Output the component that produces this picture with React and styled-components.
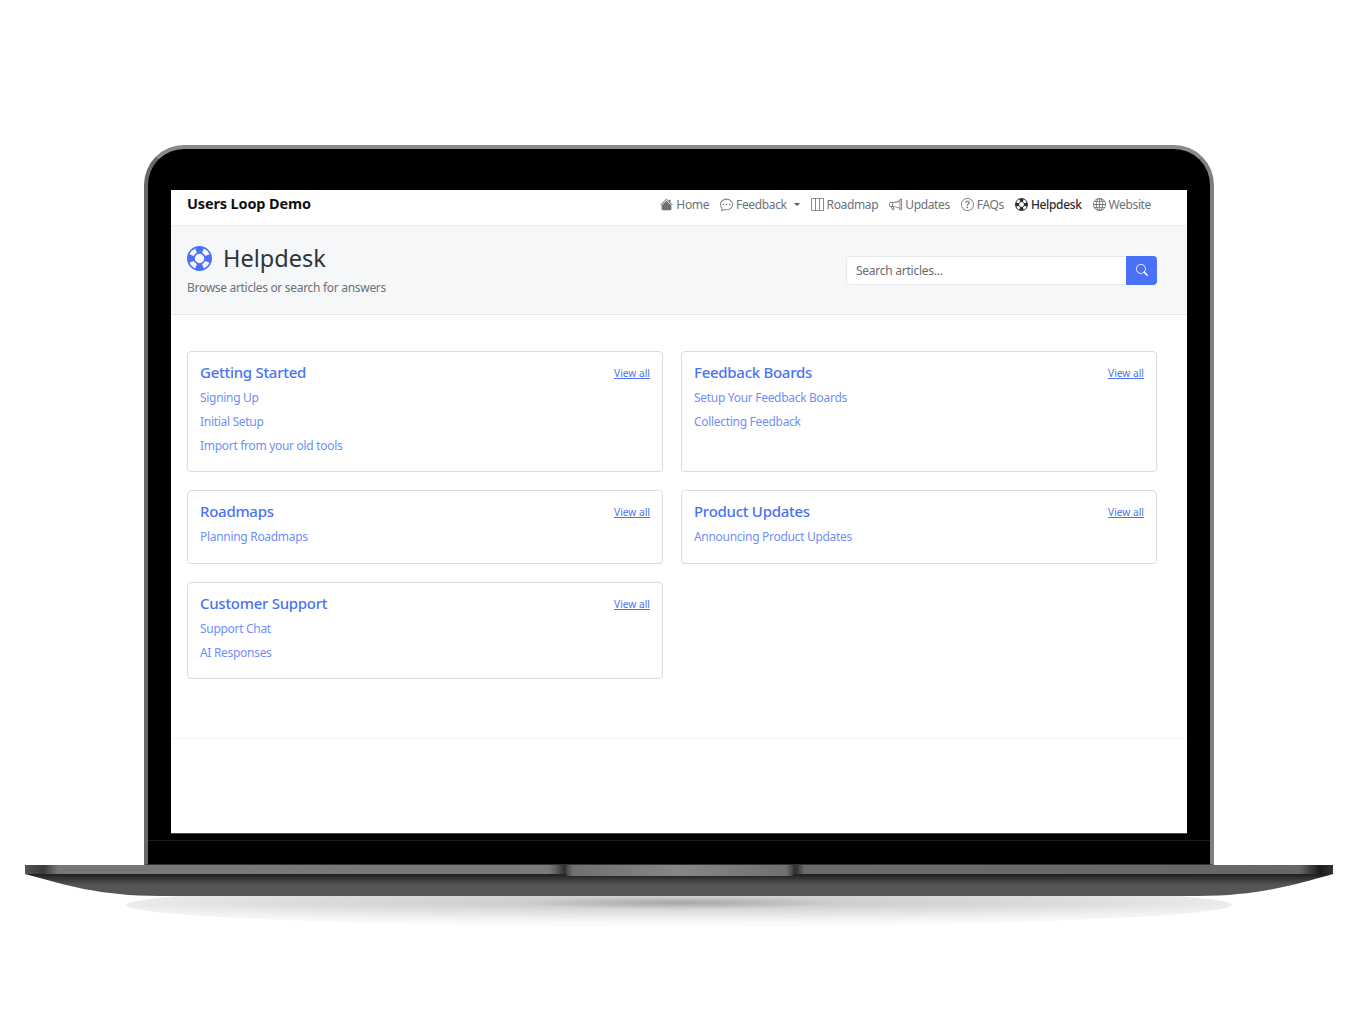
import React from "react";
import styled, { createGlobalStyle } from "styled-components";
import {
  BsHouseFill,
  BsChatDots,
  BsLayoutThreeColumns,
  BsMegaphone,
  BsQuestionCircle,
  BsGlobe,
  BsSearch,
  BsLifePreserver,
} from "react-icons/bs";

const GlobalStyle = createGlobalStyle`
  html, body {
    margin: 0;
    background: #ffffff;
    font-family: "Noto Sans", "Open Sans", sans-serif;
  }
  * { box-sizing: border-box; }
`;

const Stage = styled.div`
  width: 1366px;
  height: 1024px;
  padding: 145px 8px 0 0;
  display: flex;
  flex-direction: column;
  align-items: center;
  overflow: hidden;
`;

const Lid = styled.div`
  width: 1070px;
  height: 720px;
  padding: 41px 23px 0;
  background: #000;
  border: 4px solid #77777a;
  border-top-color: #8a8a8c;
  border-left-color: #68686a;
  border-right-color: #808082;
  border-bottom: 1px solid #333;
  border-radius: 40px 40px 0 0;
`;

const Screen = styled.div`
  height: 643px;
  background: #fff;
  display: flex;
  flex-direction: column;
  box-shadow: 0 1px 0 #4a4a4a;
`;

const BezelLine = styled.div`
  height: 1px;
  margin: 7px -23px 0;
  background: #1c1c1c;
`;

const NavBar = styled.nav`
  height: 36px;
  flex: none;
  display: flex;
  align-items: center;
  justify-content: space-between;
  padding: 0 36px 6px 16px;
  border-bottom: 1px solid #eceef0;
`;

const Brand = styled.div`
  margin-bottom: 4px;
  font-size: 14.5px;
  font-weight: 700;
  color: #111;
  letter-spacing: -0.15px;
`;

const NavLinks = styled.div`
  display: flex;
  align-items: center;
  gap: 11px;
`;

const NavLink = styled.a`
  display: flex;
  align-items: center;
  gap: 3px;
  font-size: 12px;
  letter-spacing: -0.36px;
  color: ${(p) => (p.$active ? "#2a2e33" : "#6c7277")};
  font-weight: ${(p) => (p.$active ? 500 : 400)};

  svg { font-size: 13px; flex: none; }
`;

const Caret = styled.span`
  width: 0;
  height: 0;
  margin-left: 4px;
  border-top: 3.5px solid #555;
  border-left: 3.5px solid transparent;
  border-right: 3.5px solid transparent;
`;

const PageHeader = styled.header`
  height: 89px;
  flex: none;
  display: flex;
  align-items: center;
  justify-content: space-between;
  padding: 0 30px 0 16px;
  background: #f6f7f9;
  border-bottom: 1px solid #e4e6e9;
`;

const Heading = styled.h1`
  margin: 0;
  display: flex;
  align-items: center;
  gap: 11px;
  font-size: 23.5px;
  line-height: 30px;
  font-weight: 400;
  color: #2f3337;

  svg { font-size: 25px; color: #4a72f5; }
`;

const Subtitle = styled.p`
  margin: 6px 0 0;
  font-size: 12px;
  line-height: 18px;
  letter-spacing: -0.3px;
  color: #6c7277;
`;

const SearchGroup = styled.form`
  width: 311px;
  height: 29px;
  display: flex;
`;

const SearchInput = styled.div`
  flex: 1;
  display: flex;
  align-items: center;
  padding-left: 9px;
  background: #fff;
  border: 1px solid #e6e8ea;
  border-right: 0;
  border-radius: 4px 0 0 4px;
  font-size: 12px;
  letter-spacing: -0.25px;
  color: #666c72;
`;

const SearchButton = styled.button`
  width: 31px;
  border: 0;
  padding: 0;
  display: flex;
  align-items: center;
  justify-content: center;
  background: #4a72f8;
  color: #fff;
  border-radius: 0 4px 4px 0;
  font-size: 12px;
`;

const Main = styled.main`
  height: 424px;
  flex: none;
  padding: 36px 30px 0 16px;
  border-bottom: 1px solid #f4f4f5;
`;

const Grid = styled.div`
  display: grid;
  grid-template-columns: 476px 476px;
  column-gap: 18px;
  row-gap: 18px;
  align-items: stretch;
`;

const Card = styled.section`
  padding: 8px 12px 13.4px;
  border: 1px solid #d9dbde;
  border-radius: 4px;
`;

const CardHead = styled.div`
  display: flex;
  justify-content: space-between;
  align-items: center;
  height: 24px;
  margin-bottom: 2px;
`;

const CardTitle = styled.a`
  font-size: 15px;
  font-weight: 500;
  letter-spacing: -0.28px;
  color: #4a72f5;
`;

const ViewAll = styled.a`
  margin-top: 2px;
  font-size: 10.2px;
  color: #4a72f5;
  text-decoration: underline;
`;

const ArticleLink = styled.a`
  display: block;
  height: 24px;
  line-height: 24px;
  font-size: 12px;
  letter-spacing: -0.3px;
  color: #6f8ff7;
`;

const Base = styled.div`
  width: 1308px;
  height: 62px;
  flex: none;

  svg { display: block; }
`;

const navItems = [
  { label: "Home", Icon: BsHouseFill },
  { label: "Feedback", Icon: BsChatDots, caret: true },
  { label: "Roadmap", Icon: BsLayoutThreeColumns },
  { label: "Updates", Icon: BsMegaphone },
  { label: "FAQs", Icon: BsQuestionCircle },
  { label: "Helpdesk", Icon: BsLifePreserver, active: true },
  { label: "Website", Icon: BsGlobe },
];

const categories = [
  { title: "Getting Started", links: ["Signing Up", "Initial Setup", "Import from your old tools"] },
  { title: "Feedback Boards", links: ["Setup Your Feedback Boards", "Collecting Feedback"] },
  { title: "Roadmaps", links: ["Planning Roadmaps"] },
  { title: "Product Updates", links: ["Announcing Product Updates"] },
  { title: "Customer Support", links: ["Support Chat", "AI Responses"] },
];

const LaptopBase = () => (
  <svg width="1308" height="62" viewBox="0 0 1308 62">
    <defs>
      <linearGradient id="strip" x1="0" x2="1" y1="0" y2="0">
        <stop offset="0" stopColor="#555" />
        <stop offset="0.014" stopColor="#3a3a3a" />
        <stop offset="0.025" stopColor="#777" />
        <stop offset="0.4" stopColor="#7a7a7a" />
        <stop offset="0.405" stopColor="#666" />
        <stop offset="0.412" stopColor="#333" />
        <stop offset="0.59" stopColor="#333" />
        <stop offset="0.596" stopColor="#6c6c6c" />
        <stop offset="0.975" stopColor="#666" />
        <stop offset="0.99" stopColor="#1a1a1a" />
        <stop offset="1" stopColor="#333" />
      </linearGradient>
      <linearGradient id="notch" x1="0" x2="1" y1="0" y2="0">
        <stop offset="0" stopColor="#444" />
        <stop offset="0.03" stopColor="#707070" />
        <stop offset="0.5" stopColor="#868686" />
        <stop offset="0.97" stopColor="#707070" />
        <stop offset="1" stopColor="#444" />
      </linearGradient>
      <linearGradient id="body" x1="0" x2="0" y1="0" y2="1">
        <stop offset="0" stopColor="#1e1e1e" />
        <stop offset="0.5" stopColor="#555" />
        <stop offset="1" stopColor="#585755" />
      </linearGradient>
      <radialGradient id="shadow" cx="0.5" cy="0.45" r="0.5">
        <stop offset="0" stopColor="#a6a6a6" />
        <stop offset="0.3" stopColor="#cfcfcf" />
        <stop offset="0.7" stopColor="#dcdcdc" />
        <stop offset="1" stopColor="#ebebeb" />
      </radialGradient>
      <linearGradient id="fade" x1="0" x2="0" y1="0" y2="1">
        <stop offset="0.5" stopColor="#fff" stopOpacity="0" />
        <stop offset="1" stopColor="#fff" stopOpacity="0.85" />
      </linearGradient>
    </defs>
    <ellipse cx="654" cy="40" rx="553" ry="21" fill="url(#shadow)" />
    <ellipse cx="654" cy="40" rx="553" ry="21" fill="url(#fade)" />
    <path d="M0 9 H1308 C1268 20 1233 31 1173 31 H135 C75 31 40 20 0 9 Z" fill="url(#body)" />
    <rect x="0" y="0" width="1308" height="9" fill="url(#strip)" />
    <rect x="541" y="0" width="227" height="11" rx="2" fill="url(#notch)" />
  </svg>
);

const App = () => (
  <Stage>
    <GlobalStyle />
    <Lid>
      <Screen>
        <NavBar>
          <Brand>Users Loop Demo</Brand>
          <NavLinks>
            {navItems.map(({ label, Icon, caret, active }) => (
              <NavLink key={label} $active={active}>
                <Icon />
                {label}
                {caret && <Caret />}
              </NavLink>
            ))}
          </NavLinks>
        </NavBar>
        <PageHeader>
          <div>
            <Heading>
              <BsLifePreserver />
              Helpdesk
            </Heading>
            <Subtitle>Browse articles or search for answers</Subtitle>
          </div>
          <SearchGroup>
            <SearchInput>Search articles...</SearchInput>
            <SearchButton type="button">
              <BsSearch />
            </SearchButton>
          </SearchGroup>
        </PageHeader>
        <Main>
          <Grid>
            {categories.map((c) => (
              <Card key={c.title}>
                <CardHead>
                  <CardTitle>{c.title}</CardTitle>
                  <ViewAll>View all</ViewAll>
                </CardHead>
                {c.links.map((l) => (
                  <ArticleLink key={l}>{l}</ArticleLink>
                ))}
              </Card>
            ))}
          </Grid>
        </Main>
      </Screen>
      <BezelLine />
    </Lid>
    <Base>
      <LaptopBase />
    </Base>
  </Stage>
);

export default App;
